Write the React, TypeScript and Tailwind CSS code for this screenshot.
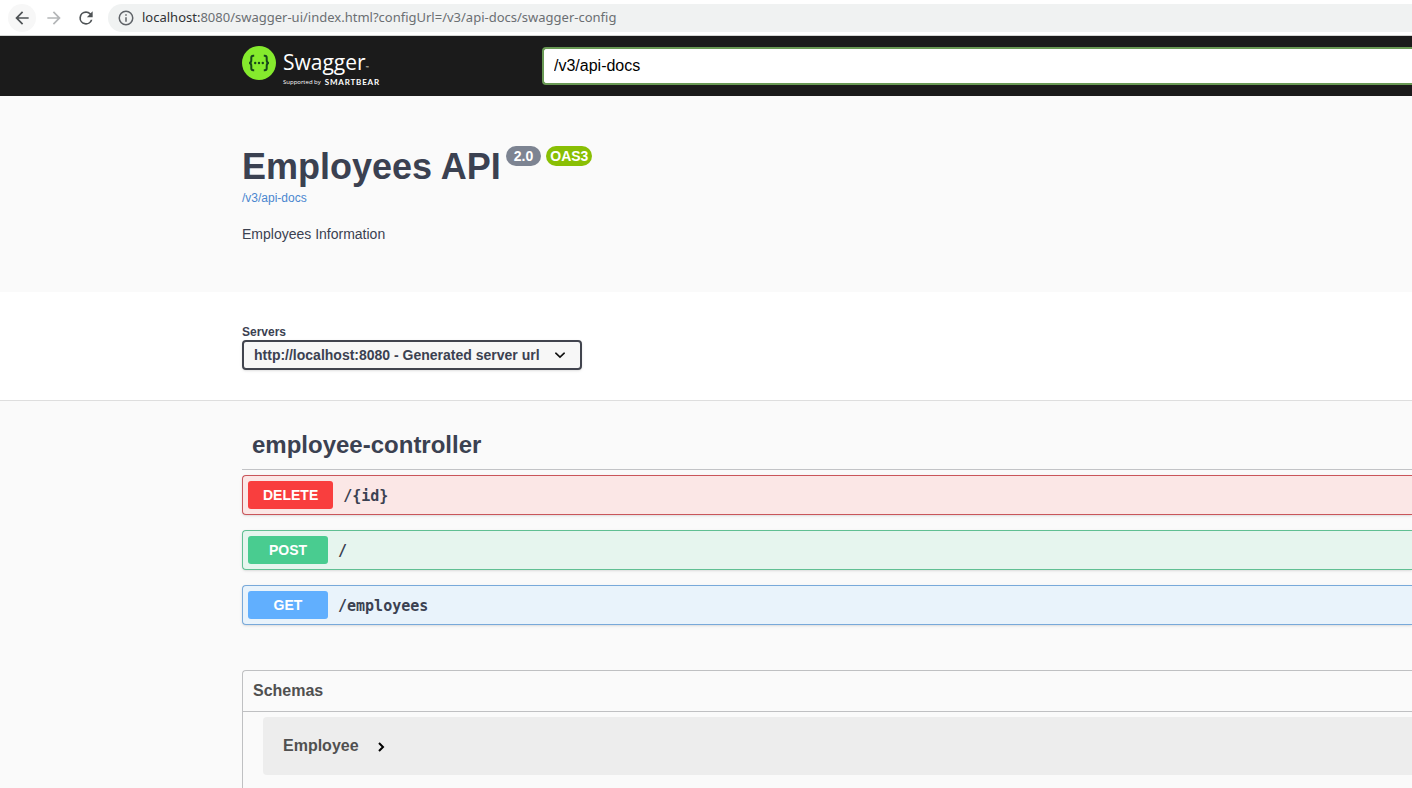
import React from "react";
import clsx from "clsx";

const operations = [
  {
    method: "DELETE",
    path: "/{id}",
    row: "border-[#c9555a] bg-[#fbe7e6]",
    badge: "bg-[#f93e3e]",
  },
  {
    method: "POST",
    path: "/",
    row: "border-[#61bf93] bg-[#e6f5ee]",
    badge: "bg-[#49cc90]",
  },
  {
    method: "GET",
    path: "/employees",
    row: "border-[#78a9da] bg-[#e9f3fb]",
    badge: "bg-[#61affe]",
  },
];

const BrowserBar = () => (
  <div className="flex h-9 items-center border-b border-[#d5d7d5] bg-white pl-2 font-['Noto_Sans',sans-serif]">
    <button
      aria-label="Back"
      className="flex h-7 w-7 items-center justify-center rounded-full bg-[#f7f7f7] text-[#4f5356]"
    >
      <svg viewBox="0 0 24 24" className="h-5 w-5" fill="currentColor">
        <path d="M20 11H7.83l5.59-5.59L12 4l-8 8 8 8 1.41-1.41L7.83 13H20v-2z" />
      </svg>
    </button>
    <button
      aria-label="Forward"
      className="ml-1 flex h-7 w-7 items-center justify-center text-[#b4b6b8]"
    >
      <svg viewBox="0 0 24 24" className="h-5 w-5" fill="currentColor">
        <path d="M12 4l-1.41 1.41L16.17 11H4v2h12.17l-5.58 5.59L12 20l8-8z" />
      </svg>
    </button>
    <button
      aria-label="Reload"
      className="ml-1 flex h-7 w-7 items-center justify-center text-[#4f5356]"
    >
      <svg viewBox="0 0 24 24" className="h-5 w-5" fill="currentColor">
        <path d="M17.65 6.35A7.96 7.96 0 0 0 12 4a8 8 0 1 0 7.73 10h-2.08A6 6 0 1 1 12 6c1.66 0 3.14.69 4.22 1.78L13 11h7V4l-2.35 2.35z" />
      </svg>
    </button>
    <div className="ml-2 flex h-7 flex-1 items-center rounded-l-full bg-[#f0f2f2] pl-[9px]">
      <svg
        viewBox="0 0 24 24"
        className="h-[18px] w-[18px] text-[#5f6368]"
        fill="currentColor"
      >
        <path d="M11 7h2v2h-2zm0 4h2v6h-2zm1-9a10 10 0 1 0 0 20 10 10 0 0 0 0-20zm0 18a8 8 0 1 1 0-16 8 8 0 0 1 0 16z" />
      </svg>
      <span className="ml-[7px] text-[13px] whitespace-nowrap text-[#6b6f72]">
        <span className="text-[#303336]">localhost:</span>
        8080/swagger-ui/index.html?configUrl=/v3/api-docs/swagger-config
      </span>
    </div>
  </div>
);

const SwaggerLogo = () => (
  <a href="#" className="flex w-[300px] shrink-0 gap-[7px] text-white">
    <svg viewBox="0 0 34 34" className="h-[34px] w-[34px]">
      <circle cx="17" cy="17" r="17" fill="#85ea2d" />
      <g fill="none" stroke="#17461c" strokeWidth="2">
        <path d="M12.2 9.8h-1c-1.3 0-1.9.7-1.9 2v2.5c0 1.6-.6 2.6-2.2 2.7 1.6.1 2.2 1.1 2.2 2.7v2.5c0 1.3.6 2 1.9 2h1" />
        <path d="M21.8 9.8h1c1.3 0 1.9.7 1.9 2v2.5c0 1.6.6 2.6 2.2 2.7-1.6.1-2.2 1.1-2.2 2.7v2.5c0 1.3-.6 2-1.9 2h-1" />
      </g>
      <g fill="#17461c">
        <circle cx="13.2" cy="17" r="1.2" />
        <circle cx="17" cy="17" r="1.2" />
        <circle cx="20.8" cy="17" r="1.2" />
      </g>
    </svg>
    <span className="flex flex-col font-['Open_Sans',sans-serif]">
      <span className="flex items-end text-[21px] leading-8">
        Swagger
        <span className="text-[4px] leading-5">™</span>
      </span>
      <span className="flex items-center gap-1 text-[6px] leading-2">
        Supported by
        <b className="font-['Lato',sans-serif] text-[8px] tracking-widest">
          SMARTBEAR
        </b>
      </span>
    </span>
  </a>
);

const Topbar = () => (
  <header className="flex h-15 items-center bg-[#1b1b1b] pl-[242px]">
    <SwaggerLogo />
    <input
      type="text"
      aria-label="API definition"
      defaultValue="/v3/api-docs"
      className="h-[38px] min-w-0 flex-1 rounded-l border-2 border-r-0 border-[#6a9a55] bg-white px-[10px] text-base text-black outline-none"
    />
  </header>
);

const Info = () => (
  <section className="h-[196px] bg-[#fafafa] pt-12 pl-[242px]">
    <div className="flex items-start gap-[5px]">
      <h1 className="text-4xl leading-[46px] font-bold">Employees API</h1>
      <span className="mt-[2px] flex gap-[5px] text-sm leading-5 font-bold text-white">
        <span className="rounded-full bg-[#7d8492] px-2">2.0</span>
        <span className="rounded-full bg-[#89bf04] px-1">OAS3</span>
      </span>
    </div>
    <a href="#" className="block text-xs leading-4 text-[#4a86cf]">
      /v3/api-docs
    </a>
    <p className="mt-[18px] text-sm leading-5">Employees Information</p>
  </section>
);

const Servers = () => (
  <section className="h-[109px] border-b border-[#dedede] bg-white pt-8 pl-[242px]">
    <label htmlFor="servers" className="block text-xs leading-4 font-bold">
      Servers
    </label>
    <div className="relative w-[340px]">
      <select
        id="servers"
        className="h-[30px] w-full appearance-none rounded border-2 border-[#41444e] bg-[#f7f7f7] px-[10px] text-sm font-bold shadow-sm"
      >
        <option>http://localhost:8080 - Generated server url</option>
      </select>
      <svg
        viewBox="0 0 20 20"
        className="pointer-events-none absolute top-[5px] right-3 h-5 w-5"
      >
        <path
          d="M5.8 8.2 10 12.2l4.2-4"
          fill="none"
          stroke="#111"
          strokeWidth="1.6"
          strokeLinecap="round"
        />
      </svg>
    </div>
  </section>
);

const Schemas = () => (
  <section className="mt-[45px] h-[150px] rounded-tl border border-r-0 border-[#bfc0c2] text-[#505050]">
    <h4 className="border-b border-[#bfc0c2] pl-[10px] text-base leading-10 font-bold">
      Schemas
    </h4>
    <div className="mt-[5px] ml-5 rounded-l bg-[#ededed]">
      <button className="flex h-[58px] items-center gap-[15px] pl-5 text-base font-bold">
        Employee
        <svg viewBox="0 0 14 14" className="h-[14px] w-[14px]">
          <path
            d="m5 4 4 4-4 4"
            fill="none"
            stroke="#000"
            strokeWidth="2"
          />
        </svg>
      </button>
    </div>
  </section>
);

const App = () => {
  return (
    <div className="h-screen overflow-hidden bg-[#fafafa] font-['Liberation_Sans',Arial,sans-serif] text-[#3b4151]">
      <BrowserBar />
      <Topbar />
      <main>
        <Info />
        <Servers />
        <div className="pt-5 pl-[242px]">
          <h2 className="border-b border-[#c2c3c6] pl-[10px] text-2xl leading-12 font-bold">
            employee-controller
          </h2>
          <div className="mt-[5px] flex flex-col gap-[15px]">
            {operations.map((op) => (
              <button
                key={op.method}
                className={clsx(
                  "flex h-10 items-center gap-[10px] rounded-l border border-r-0 pl-[5px] text-left shadow-sm",
                  op.row
                )}
              >
                <span
                  className={clsx(
                    "min-w-20 rounded-[3px] px-[15px] text-center text-sm leading-7 font-bold text-white",
                    op.badge
                  )}
                >
                  {op.method}
                </span>
                <span className="pt-[2px] font-['DejaVu_Sans_Mono',monospace] text-[15px] font-bold">
                  {op.path}
                </span>
              </button>
            ))}
          </div>
          <Schemas />
        </div>
      </main>
    </div>
  );
};

export default App;
